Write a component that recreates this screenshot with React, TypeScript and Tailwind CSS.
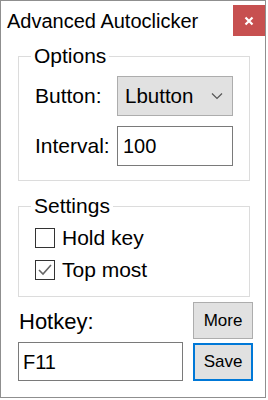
import React from "react";

const font = { fontFamily: '"Liberation Sans", Arial, sans-serif' };

function Check({ checked, label }: { checked?: boolean; label: string }) {
  return (
    <div className="flex items-center h-[24px]">
      <div className="w-[20px] h-[20px] border border-[#333333] bg-white flex items-center justify-center">
        {checked && (
          <svg width="16" height="16" viewBox="0 0 16 16">
            <polyline points="2,8 6,12 14,3" fill="none" stroke="#666666" strokeWidth="1.6" />
          </svg>
        )}
      </div>
      <span className="ml-[7px] text-[21px] leading-[24px] text-black">{label}</span>
    </div>
  );
}

export default function App() {
  return (
    <div className="bg-white w-[268px] h-[400px]" style={font}>
      <div className="w-[266px] h-[398px] border border-[#8f8f8f] bg-white flex flex-col">
        <div className="h-[43px] flex justify-between items-start">
          <div className="ml-[6px] mt-[8px] text-[20px] leading-[24px] text-black whitespace-nowrap">
            Advanced Autoclicker
          </div>
          <div className="mt-[4px] w-[32px] h-[31px] bg-[#c75050] flex items-center justify-center">
            <svg width="10" height="10" viewBox="0 0 10 10">
              <path d="M1.5 1.5 L8.5 8.5 M8.5 1.5 L1.5 8.5" stroke="#ffffff" strokeWidth="2.2" />
            </svg>
          </div>
        </div>

        <fieldset className="ml-[17px] w-[232px] border border-[#dcdcdc]">
          <legend className="ml-[12px] px-[3px] text-[21px] leading-[24px] text-black">Options</legend>
          <div className="pl-[16px] pt-[8px] pb-[14px] flex flex-col gap-[10px]">
            <div className="flex items-center h-[40px]">
              <span className="w-[82px] text-[21px] leading-[24px] text-black">Button:</span>
              <div className="w-[116px] h-[40px] bg-[#e1e1e1] border border-[#adadad] flex items-center justify-between pl-[7px] pr-[9px]">
                <span className="text-[20.5px] leading-[24px] text-black">Lbutton</span>
                <svg width="12" height="8" viewBox="0 0 12 8">
                  <polyline points="1,1.5 6,6.5 11,1.5" fill="none" stroke="#555555" strokeWidth="1.2" />
                </svg>
              </div>
            </div>
            <div className="flex items-center h-[40px]">
              <span className="w-[82px] text-[21px] leading-[24px] text-black">Interval:</span>
              <div className="w-[116px] h-[40px] bg-white border border-[#7a7a7a] flex items-center pl-[5px]">
                <span className="text-[20px] leading-[24px] text-black">100</span>
              </div>
            </div>
          </div>
        </fieldset>

        <fieldset className="ml-[17px] mt-[13px] w-[232px] border border-[#dcdcdc]">
          <legend className="ml-[12px] px-[3px] text-[21px] leading-[24px] text-black">Settings</legend>
          <div className="pl-[16px] pt-[8px] pb-[14px] flex flex-col gap-[8px]">
            <Check label="Hold key" />
            <Check checked label="Top most" />
          </div>
        </fieldset>

        <div className="ml-[17px] flex">
          <div className="w-[165px] flex flex-col mt-[13px]">
            <span className="ml-[1px] h-[24px] text-[22px] leading-[24px] text-black">Hotkey:</span>
            <div className="mt-[8px] h-[39px] border border-[#7a7a7a] bg-white flex items-center pl-[4px]">
              <span className="text-[20px] leading-[24px] text-black">F11</span>
            </div>
          </div>
          <div className="ml-[10px] w-[60px] flex flex-col mt-[5px]">
            <div className="h-[37px] bg-[#e1e1e1] border border-[#adadad] flex items-center justify-center text-[17px] leading-[20px] text-black">
              More
            </div>
            <div className="mt-[4px] h-[38px] bg-[#e1e1e1] border-2 border-[#0078d7] flex items-center justify-center text-[17px] leading-[20px] text-black">
              Save
            </div>
          </div>
        </div>
      </div>
    </div>
  );
}
